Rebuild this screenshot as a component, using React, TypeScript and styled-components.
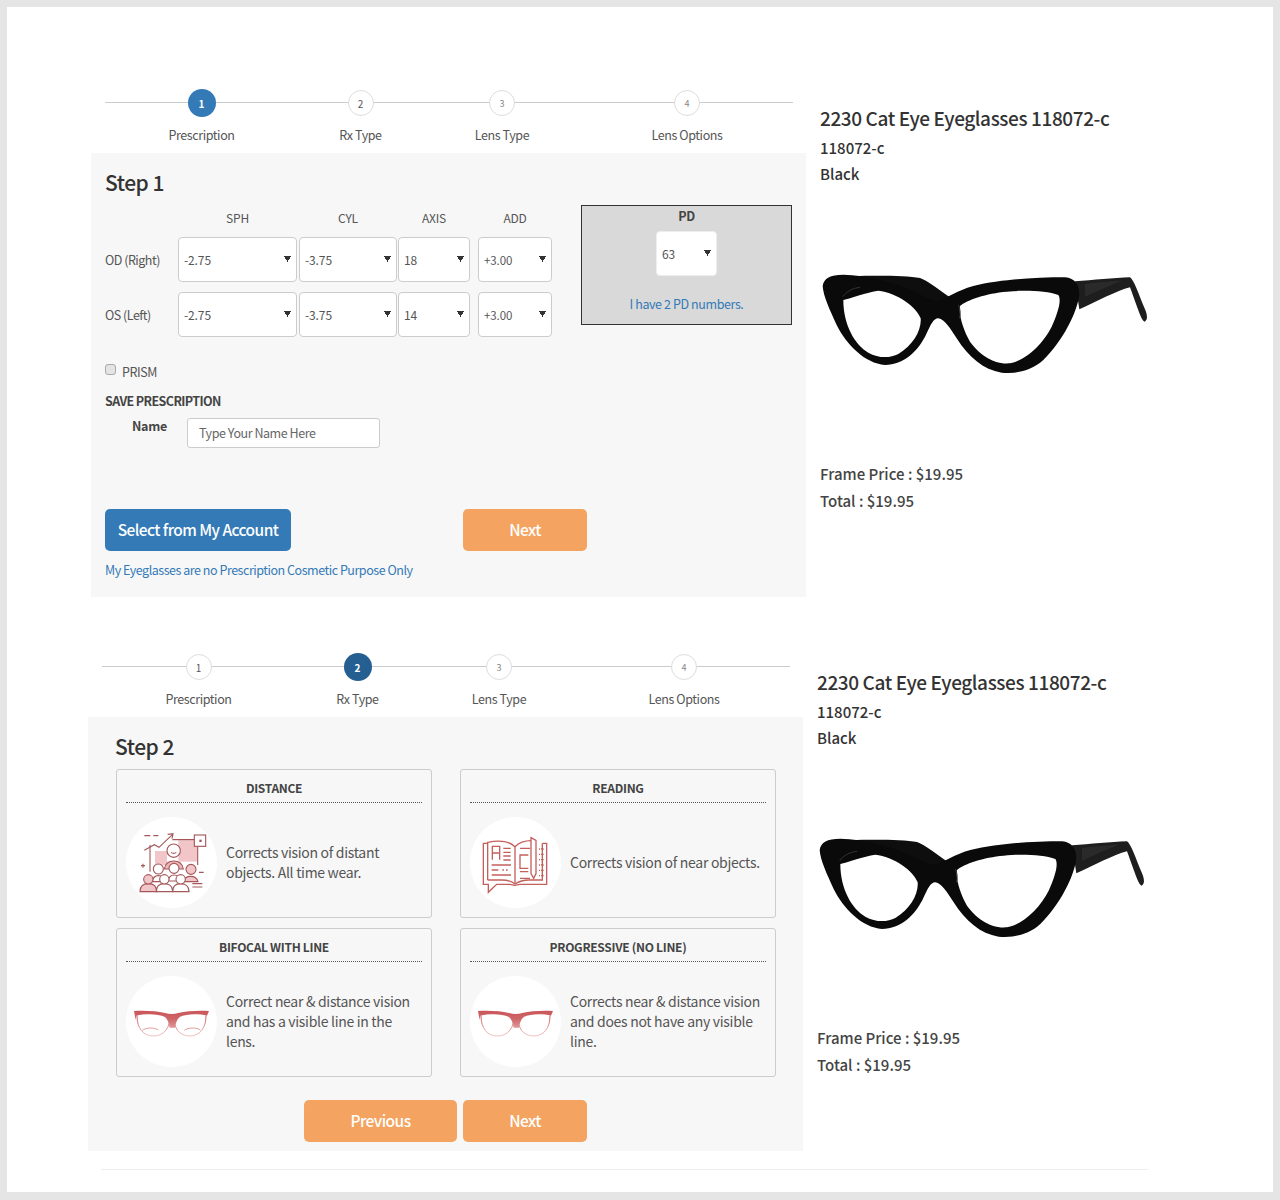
import React from "react";
import styled, { createGlobalStyle } from "styled-components";

const Global = createGlobalStyle`
  html, body { margin: 0; padding: 0; background: #e5e5e5; }
  body { font-family: "Noto Sans CJK SC", "Noto Sans", sans-serif; color: #333; }
`;

const Frame = styled.div`
  margin: 7px;
  width: 1266px;
  height: 1185px;
  background: #fff;
  padding-top: 82px;
  box-sizing: border-box;
  overflow: hidden;
`;
const Section = styled.section<{ $left: number; $top: number }>`
  display: flex;
  margin-left: ${(p) => p.$left}px;
  margin-top: ${(p) => p.$top}px;
`;
const Main = styled.div`
  width: 715px;
  flex: none;
`;
const Stepper = styled.div`
  position: relative;
  display: flex;
  margin-left: 14px;
  width: 688px;
  height: 64px;
  &::before {
    content: "";
    position: absolute;
    left: 0;
    right: 0;
    top: 13px;
    height: 1px;
    background: #ccc;
  }
`;
const Step = styled.div<{ $w: number }>`
  position: relative;
  width: ${(p) => p.$w}px;
  display: flex;
  flex-direction: column;
  align-items: center;
  font-size: 12.5px;
  letter-spacing: -0.4px;
  color: #555;
`;
const Dot = styled.div<{ $active?: string; $dim?: boolean }>`
  width: ${(p) => (p.$active ? 28 : 26)}px;
  height: ${(p) => (p.$active ? 28 : 26)}px;
  margin-top: ${(p) => (p.$active ? 0 : 1)}px;
  box-sizing: border-box;
  border-radius: 50%;
  background: ${(p) => p.$active ?? "#fff"};
  border: ${(p) => (p.$active ? "none" : "1px solid #ddd")};
  color: ${(p) => (p.$active ? "#fff" : p.$dim ? "#888" : "#555")};
  font-size: ${(p) => (p.$dim ? 9 : 10)}px;
  font-weight: ${(p) => (p.$active ? 700 : 400)};
  letter-spacing: 0;
  display: flex;
  align-items: center;
  justify-content: center;
`;
const StepName = styled.div<{ $gap: number }>`
  margin-top: ${(p) => p.$gap}px;
  line-height: 18px;
`;
const Panel = styled.div<{ $height: number }>`
  background: #f7f7f7;
  height: ${(p) => p.$height}px;
  box-sizing: border-box;
  padding-top: 14px;
`;
const StepTitle = styled.h2<{ $left: number }>`
  margin: 0 0 0 ${(p) => p.$left}px;
  font-size: 21px;
  letter-spacing: -0.5px;
  line-height: 30px;
  font-weight: 500;
  color: #333;
`;
const FormRow = styled.div`
  display: flex;
  margin: 8px 0 0 14px;
  gap: 29px;
  align-items: flex-start;
`;
const RxGrid = styled.div`
  display: grid;
  width: 447px;
  grid-template-columns: 73px 121px 99px 80px 74px;
  grid-template-rows: 16px 45px 45px;
  row-gap: 10px;
  padding-top: 6px;
`;
const ColHead = styled.div<{ $w: number }>`
  width: ${(p) => p.$w}px;
  font-size: 12px;
  letter-spacing: -0.2px;
  color: #555;
  text-align: center;
  line-height: 14px;
`;
const RowLabel = styled.div`
  font-size: 12.5px;
  letter-spacing: -0.5px;
  color: #555;
  align-self: center;
`;
const Select = styled.select<{ $w: number; $small?: boolean }>`
  appearance: none;
  width: ${(p) => p.$w}px;
  height: 45px;
  box-sizing: border-box;
  border: 1px solid #ccc;
  border-radius: 4px;
  padding-left: 5px;
  font-family: inherit;
  font-size: ${(p) => (p.$small ? 11.5 : 12)}px;
  letter-spacing: -0.1px;
  color: #555;
  background-color: #fff;
  background-image: conic-gradient(from 330deg at 50% 100%, #333 60deg, transparent 60deg);
  background-repeat: no-repeat;
  background-size: 7px 6px;
  background-position: right 5px top 18px;
  transform-origin: center;
`;
const PdBox = styled.div`
  width: 211px;
  height: 120px;
  box-sizing: border-box;
  background: #d9d9d9;
  border: 1px solid #333;
  display: flex;
  flex-direction: column;
  align-items: center;
`;
const PdTitle = styled.div`
  font-size: 12.5px;
  letter-spacing: -0.3px;
  font-weight: 700;
  line-height: 20px;
  color: #444;
`;
const PdSelect = styled(Select)`
  margin-top: 5px;
  border: 1px solid #eee;
`;
const PdLink = styled.a`
  margin-top: 19px;
  font-size: 12.5px;
  letter-spacing: -0.4px;
  line-height: 18px;
  color: #337ab7;
`;
const PrismRow = styled.label`
  display: flex;
  align-items: center;
  margin: 27px 0 0 14px;
  height: 14px;
  font-size: 12.5px;
  letter-spacing: -0.4px;
  color: #555;
  gap: 6px;
`;
const Check = styled.input`
  appearance: none;
  width: 11px;
  height: 11px;
  margin: -3px 0 0;
  border: 1px solid #aaa;
  border-radius: 3px;
  background: #e4e4e4;
`;
const SaveTitle = styled.div`
  margin: 15px 0 0 14px;
  font-size: 12.5px;
  letter-spacing: -0.6px;
  font-weight: 700;
  line-height: 16px;
  color: #444;
`;
const NameRow = styled.div`
  display: flex;
  margin: 9px 0 0 41px;
`;
const NameLabel = styled.label`
  width: 55px;
  font-size: 12.5px;
  letter-spacing: -0.3px;
  font-weight: 700;
  line-height: 15px;
  color: #444;
`;
const NameInput = styled.input`
  width: 193px;
  height: 30px;
  box-sizing: border-box;
  border: 1px solid #ccc;
  border-radius: 3px;
  background: #fff;
  padding: 0 11px 2px;
  font-family: inherit;
  font-size: 12.5px;
  letter-spacing: -0.45px;
  &::placeholder { color: #666; opacity: 1; }
`;
const Actions = styled.div`
  display: flex;
  margin: 61px 0 0 14px;
`;
const Button = styled.button<{ $w: number; $bg: string; $ml?: number }>`
  width: ${(p) => p.$w}px;
  height: 42px;
  margin-left: ${(p) => p.$ml ?? 0}px;
  border: none;
  border-radius: 5px;
  background: ${(p) => p.$bg};
  color: #fff;
  font-family: inherit;
  font-size: 15.5px;
  letter-spacing: -0.55px;
  font-weight: 500;
  padding: 0 0 2px;
`;
const CosmeticLink = styled.a`
  display: block;
  margin: 10px 0 0 14px;
  font-size: 12.5px;
  letter-spacing: -0.47px;
  line-height: 18px;
  color: #337ab7;
`;
const CardGrid = styled.div`
  display: grid;
  grid-template-columns: 316px 316px;
  grid-auto-rows: 149px;
  gap: 10px 28px;
  margin: 8px 0 0 28px;
`;
const Card = styled.div`
  box-sizing: border-box;
  border: 1px solid #ccc;
  border-radius: 3px;
  background: #f7f7f7;
  padding: 0 9px;
`;
const CardTitle = styled.div`
  height: 32px;
  line-height: 36px;
  text-align: center;
  font-size: 12px;
  letter-spacing: -0.3px;
  font-weight: 700;
  color: #444;
  border-bottom: 1px dotted #555;
`;
const CardBody = styled.div`
  display: flex;
  align-items: center;
  gap: 9px;
  margin-top: 14px;
`;
const IconDisc = styled.div`
  width: 91px;
  height: 91px;
  flex: none;
  border-radius: 50%;
  background: #fff;
  overflow: hidden;
`;
const CardText = styled.p`
  margin: -2px 0 0;
  font-size: 14px;
  letter-spacing: -0.3px;
  line-height: 20px;
  color: #555;
`;
const BottomButtons = styled.div`
  display: flex;
  justify-content: center;
  gap: 6px;
  margin-top: 23px;
`;
const Side = styled.aside`
  margin-left: 14px;
  padding-top: 15px;
`;
const ProductTitle = styled.h3`
  margin: 0 0 3px;
  font-size: 19px;
  letter-spacing: -0.4px;
  line-height: 28px;
  font-weight: 500;
  color: #333;
`;
const ProductLine = styled.div`
  font-size: 15px;
  line-height: 26px;
  font-weight: 500;
  color: #333;
`;
const GlassesWrap = styled.div`
  margin: 63px 0 70px -10px;
  height: 140px;
  filter: blur(0.4px);
`;
const PriceLine = styled.div`
  font-size: 15px;
  line-height: 27px;
  font-weight: 500;
  color: #444;
`;
const Rule = styled.hr`
  border: none;
  height: 1px;
  background: #eee;
  margin: 18px 0 0 94px;
  width: 1047px;
`;

const Glasses = () => (
  <svg width="350" height="140" viewBox="0 0 1050 420">
    <path fill="#0e0e0e" d="M130 78 C200 76 290 76 330 84 C350 90 395 125 420 142 L385 170 C350 150 300 130 210 100 Z" />
    <path fill="#1e1e1e" d="M795 94 C850 90 910 84 960 82 C972 90 985 130 1005 178 C1012 195 1014 208 1004 215 C994 212 985 180 960 112 C920 122 860 155 808 178 Z" />
    <path fill="#2a2a2a" d="M825 102 C860 96 900 94 935 92 C900 106 860 124 825 140 Z" />
    <path
      fill="#0a0a0a"
      fillRule="evenodd"
      d="M38 108 C42 84 60 74 100 74 C170 76 250 96 320 128 C345 140 365 152 385 152 C410 145 440 122 490 108 C570 88 680 82 765 82 C795 84 808 105 808 135 C800 190 760 270 700 330 C665 362 620 372 575 368 C520 360 475 320 440 265 C420 235 405 208 385 205 C370 205 362 225 350 250 C325 305 280 345 225 345 C165 340 110 285 80 225 C60 180 40 140 38 108 Z M100 150 C150 136 180 125 205 122 C260 128 320 170 332 205 C335 240 310 285 265 312 C240 325 205 325 175 308 C135 285 100 225 100 150 Z M450 168 C470 150 530 130 590 125 C640 120 710 122 745 135 C755 150 745 185 725 230 C700 280 650 330 600 340 C550 345 505 310 480 275 C462 245 445 195 450 168 Z"
    />
    <path fill="none" stroke="#333" strokeWidth="3" d="M98 140 C110 125 125 115 150 112 M445 165 C452 180 452 195 448 205" />
  </svg>
);

const DistanceIcon = () => (
  <svg width="91" height="91" viewBox="33 156 273 273" fill="none" stroke="#a4585a" strokeWidth="3.4">
    <g fill="#f2c6c8" stroke="none">
      <rect x="120" y="258" width="36" height="42" />
      <rect x="190" y="226" width="56" height="64" />
    </g>
    <path d="M88 212h18M115 212h15" />
    <path d="M88 256l30-17 14 8 40-38M158 208l16-2-3 15" />
    <path d="M172 224H248V300M105 240v80" />
    <rect x="238" y="210" width="34" height="34" fill="#fff" />
    <rect x="253" y="224" width="7" height="7" fill="#a4585a" stroke="none" />
    <path d="M148 312c3-18 15-24 28-24s26 6 29 24z" fill="#eeb4b6" />
    <circle cx="176" cy="257" r="20" fill="#fff" />
    <path d="M168 262q8 6 16 0" />
    <path d="M78 302h12M84 296v12M252 322h14M232 366h30M232 356h30" />
    <path d="M205 350c3-12 12-16 22-16s19 4 22 16z" fill="#f2c6c8" />
    <circle cx="228" cy="313" r="15" fill="#f2c6c8" />
    <g fill="#fff">
      <circle cx="130" cy="312" r="15" />
      <circle cx="177" cy="310" r="15" />
      <path d="M112 350c2-14 10-18 18-18s17 4 20 18zM160 348c2-14 9-18 17-18s16 4 20 18z" />
    </g>
    <path d="M75 380c0-18 12-24 25-24s25 6 25 24z" fill="#f2c6c8" />
    <circle cx="100" cy="343" r="14" fill="#f2c6c8" />
    <path d="M124 380c0-18 12-24 24-24s25 6 25 24z" fill="#fff" />
    <circle cx="148" cy="343" r="14" fill="#fff" />
    <path d="M173 380c0-18 12-24 24-24s25 6 25 24z" fill="#fff" />
    <circle cx="197" cy="343" r="14" fill="#fff" />
  </svg>
);

const BookIcon = () => (
  <svg width="91" height="91" viewBox="45 156 273 273" fill="none" stroke="#c4605c" strokeWidth="4">
    <path d="M98 235H85v123h15v24l25-24h40l15 3 15-3h80V235h-13" />
    <path d="M98 345V232c30-6 62-6 82 13 14-14 30-18 48-18" />
    <path d="M98 345h42c18 0 30 4 40 12 12-8 24-12 42-12h40V235" />
    <path d="M180 245v112" />
    <path d="M112 284v-40h22v40M112 264h22M145 250h22M145 262h22M145 273h22M145 285h22" />
    <path d="M110 300h58M110 315h20M142 315h5M153 315h5M110 330h58" />
    <path d="M195 250h30M220 270h-25v40h25M195 320h25M195 340h30" />
    <path d="M228 218l15 8v100l-7 14-8-14z" />
    <path d="M252 252h14M252 268h14M252 284h14M252 300h14M252 316h14M252 332h14" strokeDasharray="3 3" />
  </svg>
);

const EyeIcon = ({ id, bifocal }: { id: string; bifocal?: boolean }) => (
  <svg width="91" height="91" viewBox="33 153 273 273" fill="none">
    <defs>
      <linearGradient id={id} x1="0" y1="258" x2="0" y2="335" gradientUnits="userSpaceOnUse">
        <stop offset="0" stopColor="#c9565a" />
        <stop offset="0.3" stopColor="#cf6668" />
        <stop offset="1" stopColor="#efc6c4" />
      </linearGradient>
    </defs>
    <g stroke={`url(#${id})`} strokeWidth="3">
      <path d="M66 272C66 310 85 333 115 333C150 333 165 305 165 275M176 275C176 305 190 333 224 333C254 333 273 310 273 272" />
    </g>
    <path
      fill={`url(#${id})`}
      d="M57 258C90 256 125 258 150 264C165 268 175 268 190 264C215 258 250 256 282 258L276 272C250 266 215 266 194 276C186 283 182 295 180 308H164C162 295 158 283 150 276C128 266 92 266 64 272L62 285Z"
    />
    {bifocal && (
      <path stroke="#d98a88" strokeWidth="2.5" d="M82 316c10-8 35-10 48-1M208 316c10-8 36-10 48-1" />
    )}
  </svg>
);

type StepDef = { w: number; name: string };
const steps: StepDef[] = [
  { w: 193, name: "Prescription" },
  { w: 125, name: "Rx Type" },
  { w: 158, name: "Lens Type" },
  { w: 212, name: "Lens Options" },
];

const StepperBar = ({ active, color }: { active: number; color: string }) => (
  <Stepper>
    {steps.map((s, i) => (
      <Step key={s.name} $w={s.w}>
        <Dot $active={i === active ? color : undefined} $dim={i > 1}>
          {i + 1}
        </Dot>
        <StepName $gap={i === active ? 9 : 10}>{s.name}</StepName>
      </Step>
    ))}
  </Stepper>
);

const Product = () => (
  <Side>
    <ProductTitle>2230 Cat Eye Eyeglasses 118072-c</ProductTitle>
    <ProductLine>118072-c</ProductLine>
    <ProductLine>Black</ProductLine>
    <GlassesWrap>
      <Glasses />
    </GlassesWrap>
    <PriceLine>Frame Price : $19.95</PriceLine>
    <PriceLine>Total : $19.95</PriceLine>
  </Side>
);

const Opt = ({ v, w, small }: { v: string; w: number; small?: boolean }) => (
  <Select $w={w} $small={small} defaultValue={v}>
    <option>{v}</option>
  </Select>
);

export default function App() {
  return (
    <>
      <Global />
      <Frame>
        <Section $left={84} $top={0}>
          <Main>
            <StepperBar active={0} color="#337ab7" />
            <Panel $height={444}>
              <StepTitle $left={14}>Step 1</StepTitle>
              <FormRow>
                <RxGrid>
                  <span />
                  <ColHead $w={119}>SPH</ColHead>
                  <ColHead $w={98}>CYL</ColHead>
                  <ColHead $w={72}>AXIS</ColHead>
                  <ColHead $w={74}>ADD</ColHead>
                  <RowLabel>OD (Right)</RowLabel>
                  <Opt v="-2.75" w={119} />
                  <Opt v="-3.75" w={98} />
                  <Opt v="18" w={72} />
                  <Opt v="+3.00" w={74} small />
                  <RowLabel>OS (Left)</RowLabel>
                  <Opt v="-2.75" w={119} />
                  <Opt v="-3.75" w={98} />
                  <Opt v="14" w={72} />
                  <Opt v="+3.00" w={74} small />
                </RxGrid>
                <PdBox>
                  <PdTitle>PD</PdTitle>
                  <PdSelect $w={61} defaultValue="63">
                    <option>63</option>
                  </PdSelect>
                  <PdLink>I have 2 PD numbers.</PdLink>
                </PdBox>
              </FormRow>
              <PrismRow>
                <Check type="checkbox" />
                PRISM
              </PrismRow>
              <SaveTitle>SAVE PRESCRIPTION</SaveTitle>
              <NameRow>
                <NameLabel>Name</NameLabel>
                <NameInput placeholder="Type Your Name Here" />
              </NameRow>
              <Actions>
                <Button $w={186} $bg="#337ab7">Select from My Account</Button>
                <Button $w={124} $bg="#f4a460" $ml={172}>Next</Button>
              </Actions>
              <CosmeticLink>My Eyeglasses are no Prescription Cosmetic Purpose Only</CosmeticLink>
            </Panel>
          </Main>
          <Product />
        </Section>
        <Section $left={81} $top={56}>
          <Main>
            <StepperBar active={1} color="#255f92" />
            <Panel $height={434}>
              <StepTitle $left={27}>Step 2</StepTitle>
              <CardGrid>
                <Card>
                  <CardTitle>DISTANCE</CardTitle>
                  <CardBody>
                    <IconDisc><DistanceIcon /></IconDisc>
                    <CardText>Corrects vision of distant objects. All time wear.</CardText>
                  </CardBody>
                </Card>
                <Card>
                  <CardTitle>READING</CardTitle>
                  <CardBody>
                    <IconDisc><BookIcon /></IconDisc>
                    <CardText>Corrects vision of near objects.</CardText>
                  </CardBody>
                </Card>
                <Card>
                  <CardTitle>BIFOCAL WITH LINE</CardTitle>
                  <CardBody>
                    <IconDisc><EyeIcon id="bifocal" bifocal /></IconDisc>
                    <CardText>Correct near &amp; distance vision and has a visible line in the lens.</CardText>
                  </CardBody>
                </Card>
                <Card>
                  <CardTitle>PROGRESSIVE (NO LINE)</CardTitle>
                  <CardBody>
                    <IconDisc><EyeIcon id="progressive" /></IconDisc>
                    <CardText>Corrects near &amp; distance vision and does not have any visible line.</CardText>
                  </CardBody>
                </Card>
              </CardGrid>
              <BottomButtons>
                <Button $w={153} $bg="#f4a460">Previous</Button>
                <Button $w={124} $bg="#f4a460">Next</Button>
              </BottomButtons>
            </Panel>
          </Main>
          <Product />
        </Section>
        <Rule />
      </Frame>
    </>
  );
}
